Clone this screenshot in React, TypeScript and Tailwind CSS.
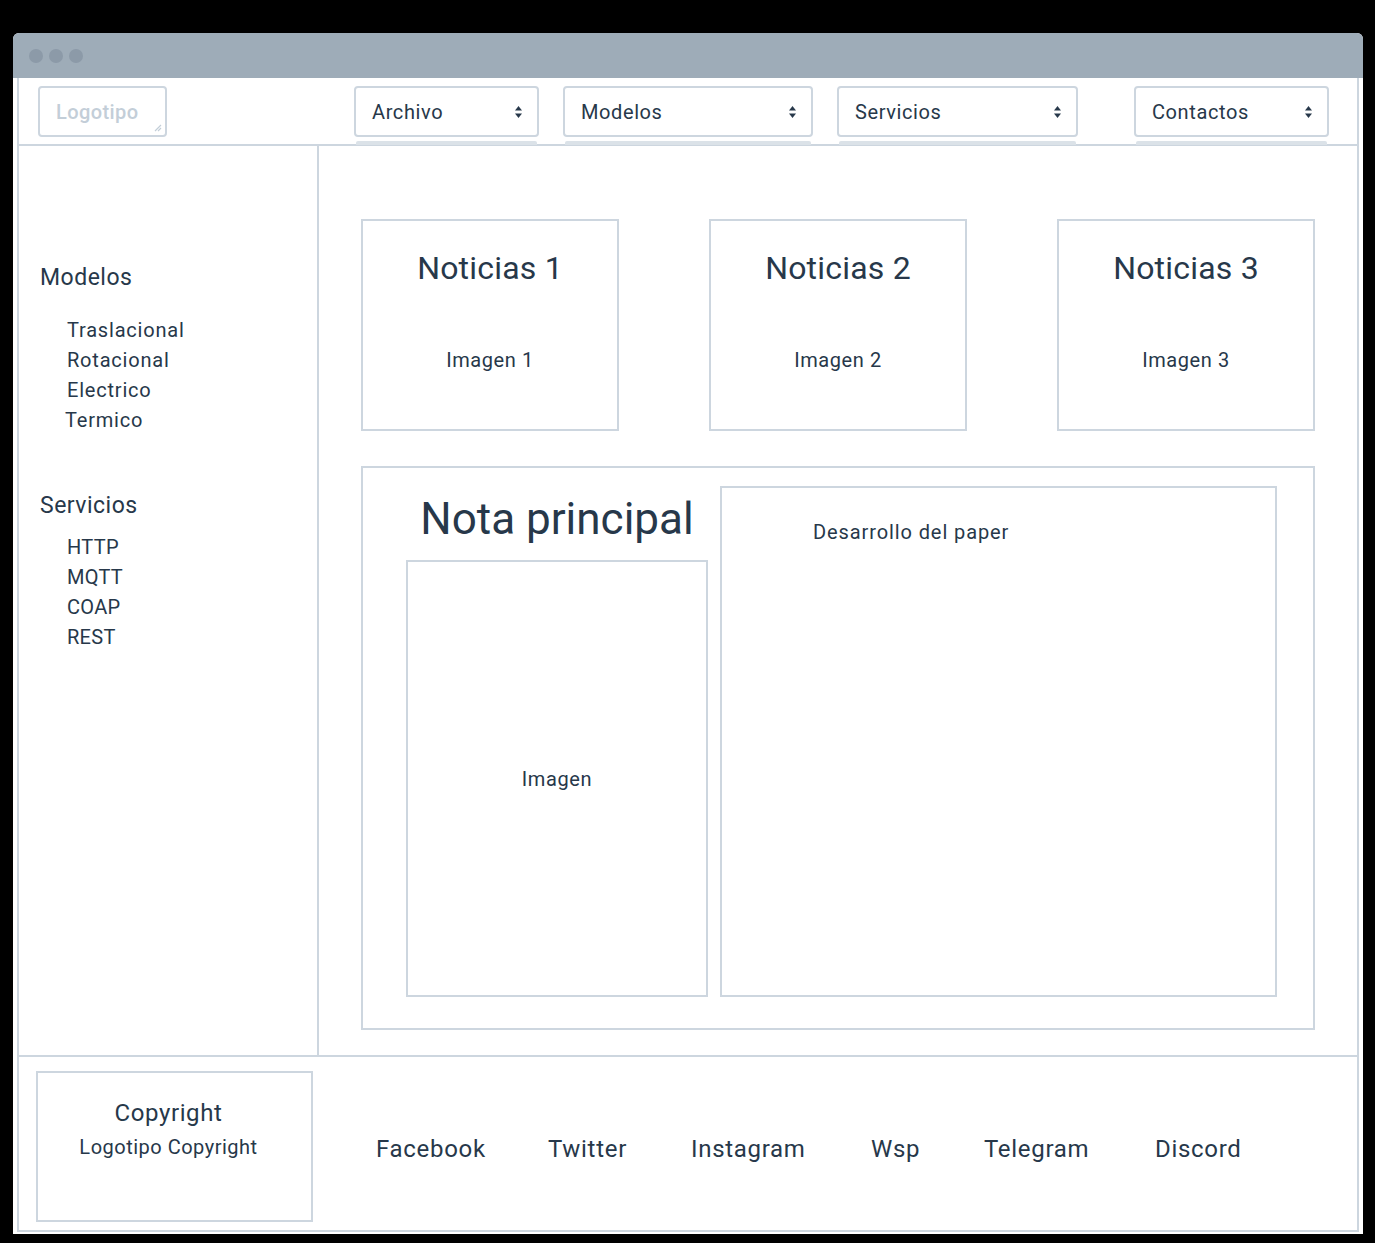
import React from "react";

const font = { fontFamily: "Roboto, 'Noto Sans', sans-serif" };

function Sel({ label, w }: { label: string; w: string }) {
  return (
    <div className={`relative ${w}`}>
      <div className="h-[51px] border-2 border-[#cdd6df] rounded-[4px] bg-white flex items-center justify-between pl-[16px] pr-[14px] text-[20px] tracking-[0.6px] text-[#27384a]">
        <span>{label}</span>
        <svg width="9" height="14" viewBox="0 0 9 14">
          <path d="M4.5 1 L8 5.5 H1 Z" fill="#27384a" />
          <path d="M4.5 13 L8 8.5 H1 Z" fill="#27384a" />
        </svg>
      </div>
      <div className="absolute left-[2px] right-[2px] top-[55px] h-[4px] bg-[#dbe2e8] rounded-t-[2px]" />
    </div>
  );
}

function Card({ n }: { n: number }) {
  return (
    <div className="w-[258px] h-[212px] border-2 border-[#cdd6df] flex flex-col items-center text-[#27384a]">
      <div className="mt-[25px] text-[32px] leading-[44px] tracking-[0.2px]">Noticias {n}</div>
      <div className="mt-[57px] text-[20px] leading-[26px] tracking-[0.6px]">Imagen {n}</div>
    </div>
  );
}

export default function App() {
  return (
    <div className="w-[1375px] h-[1243px] bg-black pt-[33px] pl-[13px]" style={font}>
      <div className="w-[1350px] h-[1201px] bg-white rounded-t-[6px] overflow-hidden flex flex-col">
        <div className="h-[45px] bg-[#9eacb8] flex items-center gap-[6px] pl-[16px]">
          <div className="w-[14px] h-[14px] rounded-full bg-[#8c9aa8]" />
          <div className="w-[14px] h-[14px] rounded-full bg-[#8c9aa8]" />
          <div className="w-[14px] h-[14px] rounded-full bg-[#8c9aa8]" />
        </div>
        <div className="flex-1 px-[4px] pb-[2px] flex flex-col">
          <div className="flex-1 border-x-2 border-b-2 border-[#cdd6df] flex flex-col">
            {/* header */}
            <div className="h-[68px] border-b-2 border-[#cdd6df] flex items-start pt-[8px] relative">
              <div className="ml-[19px] w-[129px] h-[51px] border-2 border-[#cdd6df] rounded-[4px] flex items-center pl-[16px] text-[20px] tracking-[0.4px] font-medium text-[#c3ced8] relative">
                Logotipo
                <svg className="absolute right-[3px] bottom-[3px]" width="9" height="9" viewBox="0 0 9 9">
                  <path d="M8 2 L2 8 M8 5 L5 8" stroke="#c3ced8" strokeWidth="1.2" />
                </svg>
              </div>
              <div className="ml-[187px]"><Sel label="Archivo" w="w-[185px]" /></div>
              <div className="ml-[24px]"><Sel label="Modelos" w="w-[250px]" /></div>
              <div className="ml-[24px]"><Sel label="Servicios" w="w-[241px]" /></div>
              <div className="ml-[56px]"><Sel label="Contactos" w="w-[195px]" /></div>
            </div>
            {/* body */}
            <div className="h-[911px] flex border-b-2 border-[#cdd6df]">
              <div className="w-[300px] border-r-2 border-[#cdd6df] pl-[21px] pt-[117px] text-[#27384a]">
                <div className="text-[23px] leading-[30px] tracking-[0.5px]">Modelos</div>
                <div className="pl-[27px] mt-[22px] text-[20px] leading-[30px] tracking-[0.8px]">
                  <div>Traslacional</div>
                  <div>Rotacional</div>
                  <div>Electrico</div>
                  <div className="-ml-[2px]">Termico</div>
                </div>
                <div className="text-[23px] leading-[30px] tracking-[0.5px] mt-[56px]">Servicios</div>
                <div className="pl-[27px] mt-[11px] text-[20px] leading-[30px] tracking-[0.3px]">
                  <div>HTTP</div>
                  <div>MQTT</div>
                  <div>COAP</div>
                  <div>REST</div>
                </div>
              </div>
              <div className="flex-1 pl-[42px] pt-[73px]">
                <div className="flex gap-[90px]">
                  <Card n={1} />
                  <Card n={2} />
                  <Card n={3} />
                </div>
                <div className="mt-[35px] w-[954px] h-[564px] border-2 border-[#cdd6df] flex pt-[18px]">
                  <div className="ml-[43px] w-[302px] flex flex-col">
                    <div className="h-[56px] flex items-center justify-center text-[44px] text-[#27384a] pt-[10px]">
                      Nota principal
                    </div>
                    <div className="mt-[18px] h-[437px] border-2 border-[#cdd6df] flex items-center justify-center text-[20px] tracking-[0.6px] text-[#27384a]">
                      Imagen
                    </div>
                  </div>
                  <div className="ml-[12px] w-[557px] h-[511px] border-2 border-[#cdd6df] pl-[91px] pt-[29px] text-[20px] tracking-[0.9px] text-[#27384a]">
                    Desarrollo del paper
                  </div>
                </div>
              </div>
            </div>
            {/* footer */}
            <div className="flex-1 flex items-start pt-[14px] pl-[17px]">
              <div className="w-[277px] h-[151px] border-2 border-[#cdd6df] flex flex-col items-center pt-[25px] pr-[12px] text-[#27384a]">
                <div className="text-[24px] leading-[30px] tracking-[0.6px]">Copyright</div>
                <div className="text-[20px] leading-[28px] mt-[5px] tracking-[0.5px]">Logotipo Copyright</div>
              </div>
              <div className="flex items-center h-[151px] pt-[4px] ml-[63px] text-[24px] tracking-[0.7px] text-[#27384a]">
                <span className="w-[172px]">Facebook</span>
                <span className="w-[143px]">Twitter</span>
                <span className="w-[180px]">Instagram</span>
                <span className="w-[113px]">Wsp</span>
                <span className="w-[171px]">Telegram</span>
                <span>Discord</span>
              </div>
            </div>
          </div>
        </div>
      </div>
    </div>
  );
}
